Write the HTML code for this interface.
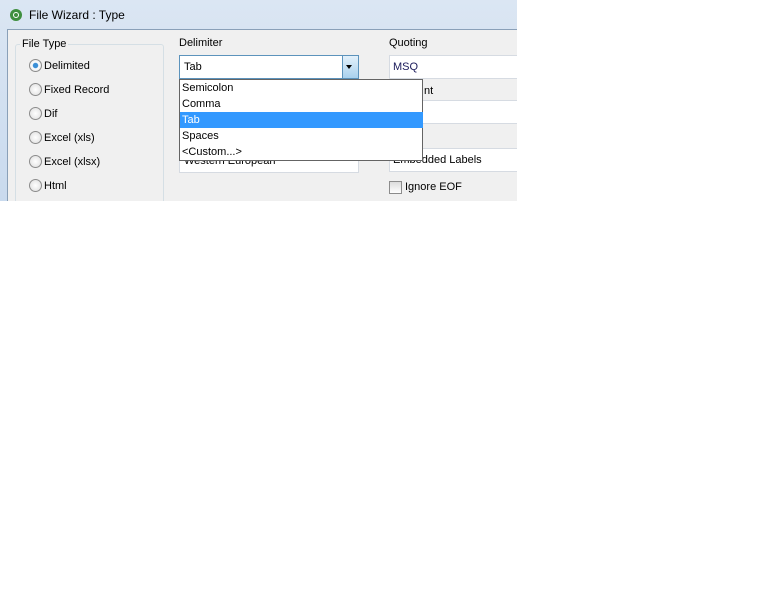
<!DOCTYPE html>
<html><head><style>
body{margin:0;width:768px;height:614px;background:#fff;position:relative;overflow:hidden;font-family:"Liberation Sans",sans-serif;font-size:11px;color:#000}
.a{position:absolute}
.win{left:0;top:0;width:517px;height:201px;overflow:hidden;background:linear-gradient(#dbe6f3,#c9daee)}
.body{left:7px;top:29px;width:520px;height:180px;background:#f0f0f0;border-top:1px solid #8aa0b8;border-left:1px solid #8aa0b8}
.rad{width:11px;height:11px;border:1px solid #8c8c8c;border-radius:50%;background:radial-gradient(#fff,#dcdcdc)}
.fld{background:#fff;border:1px solid #d6dbe2;height:22px}
.it{left:0;width:241px;height:16px;line-height:16px;padding-left:2px;font-size:11px}
.lb{line-height:13px}
</style></head><body>
<div class="a win">
 <div class="a" style="left:10px;top:9px;width:12px;height:12px;border-radius:50%;background:#3f8f3f"></div>
 <div class="a" style="left:13px;top:12px;width:4px;height:4px;border:1px solid #fff;border-radius:50%"></div>
 <div class="a" style="left:29px;top:8px;font-size:12px">File Wizard : Type</div>
 <div class="a body"></div>
 <div class="a" style="left:15px;top:44px;width:147px;height:170px;border:1px solid #d5dfe5;border-radius:3px"></div>
 <div class="a" style="left:20px;top:38px;background:#f0f0f0;padding:0 2px">File Type</div>
 <div class="a rad" style="left:29px;top:59px;background:radial-gradient(#3b8fd6 30%,#fff 40%,#dcdcdc)"></div><div class="a lb" style="left:44px;top:60px">Delimited</div>
 <div class="a rad" style="left:29px;top:83px"></div><div class="a lb" style="left:44px;top:84px">Fixed Record</div>
 <div class="a rad" style="left:29px;top:107px"></div><div class="a lb" style="left:44px;top:108px">Dif</div>
 <div class="a rad" style="left:29px;top:131px"></div><div class="a lb" style="left:44px;top:132px">Excel (xls)</div>
 <div class="a rad" style="left:29px;top:155px"></div><div class="a lb" style="left:44px;top:156px">Excel (xlsx)</div>
 <div class="a rad" style="left:29px;top:179px"></div><div class="a lb" style="left:44px;top:180px">Html</div>
 <div class="a" style="left:179px;top:37px">Delimiter</div>
 <div class="a fld" style="left:179px;top:55px;width:178px;border-color:#5c93bc"></div>
 <div class="a" style="left:184px;top:61px">Tab</div>
 <div class="a" style="left:342px;top:56px;width:15px;height:22px;background:linear-gradient(#e3f1fb,#a9d1ee);border-left:1px solid #5c93bc"></div>
 <div class="a" style="left:346px;top:65px;border:3.5px solid transparent;border-top:4px solid #000"></div>
 <div class="a fld" style="left:179px;top:149px;width:178px"></div>
 <div class="a" style="left:184px;top:155px">Western European</div>
 <div class="a" style="left:389px;top:37px">Quoting</div>
 <div class="a fld" style="left:389px;top:55px;width:140px"></div>
 <div class="a" style="left:393px;top:61px;color:#1a1a5a">MSQ</div>
 <div class="a" style="left:424px;top:85px">nt</div>
 <div class="a fld" style="left:389px;top:100px;width:140px"></div>
 <div class="a fld" style="left:389px;top:148px;width:140px"></div>
 <div class="a" style="left:393px;top:154px">Embedded Labels</div>
 <div class="a" style="left:389px;top:181px;width:11px;height:11px;border:1px solid #8c8c8c;background:linear-gradient(#dcdcdc,#fff)"></div>
 <div class="a" style="left:405px;top:181px">Ignore EOF</div>
 <div class="a" style="left:179px;top:79px;width:242px;height:80px;background:#fff;border:1px solid #646464;z-index:5">
  <div class="a it" style="top:0">Semicolon</div>
  <div class="a it" style="top:16px">Comma</div>
  <div class="a it" style="top:32px;background:#3399ff;color:#fff">Tab</div>
  <div class="a it" style="top:48px">Spaces</div>
  <div class="a it" style="top:64px">&lt;Custom...&gt;</div>
 </div>
</div>
</body></html>
